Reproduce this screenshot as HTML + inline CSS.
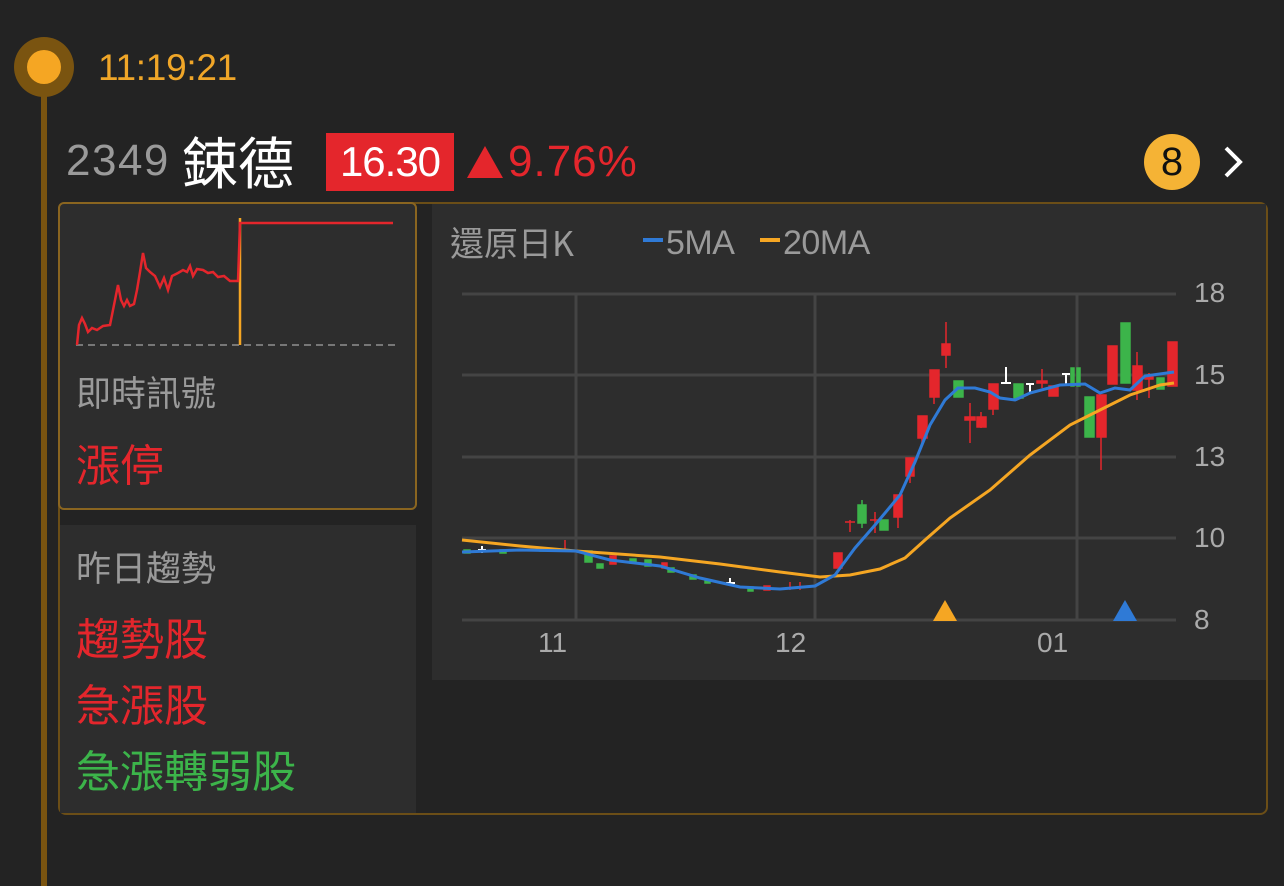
<!DOCTYPE html>
<html><head><meta charset="utf-8"><style>
*{margin:0;padding:0;box-sizing:border-box}
body{width:1284px;height:876px;background:#232323;position:relative;overflow:hidden;font-family:"Liberation Sans","Noto Sans CJK TC",sans-serif}
.abs{position:absolute;white-space:nowrap}
.cjk{font-family:"Noto Sans CJK TC",sans-serif}
</style></head><body>
<div class="abs" style="left:41px;top:66px;width:6px;height:820px;background:#7a5410"></div>
<div class="abs" style="left:14px;top:37px;width:60px;height:60px;border-radius:50%;background:#7a5410"></div>
<div class="abs" style="left:27px;top:50px;width:34px;height:34px;border-radius:50%;background:#f5a623"></div>
<div class="abs" style="left:98px;top:46px;font-size:37px;color:#f0a628;line-height:44px;letter-spacing:-0.3px">11:19:21</div>

<div class="abs" style="left:66px;top:135px;font-size:44px;color:#9a9a9a;line-height:52px;letter-spacing:1.5px">2349</div>
<div class="abs cjk" style="left:182px;top:128px;font-size:56px;color:#fff;line-height:66px">鋉德</div>
<div class="abs" style="left:326px;top:133px;width:128px;height:58px;background:#e4262c;color:#fff;font-size:42px;line-height:58px;text-align:center;letter-spacing:-1px">16.30</div>
<svg class="abs" style="left:466px;top:145px" width="40" height="34"><polygon points="19,1 37,33 1,33" fill="#e4262c"/></svg>
<div class="abs" style="left:508px;top:137px;font-size:44px;color:#e4262c;line-height:50px;letter-spacing:1px">9.76%</div>
<div class="abs" style="left:1144px;top:134px;width:56px;height:56px;border-radius:50%;background:#f5b335;color:#111;font-size:40px;line-height:56px;text-align:center">8</div>
<svg class="abs" style="left:1220px;top:145px" width="30" height="34"><path d="M6 3 L20 17 L6 31" stroke="#fff" stroke-width="4" fill="none"/></svg>

<div class="abs" style="left:58px;top:202px;width:1210px;height:613px;border:2px solid #6b4e17;border-radius:8px"></div>
<div class="abs" style="left:60px;top:525px;width:356px;height:288px;background:#2d2d2d"></div>
<div class="abs" style="left:432px;top:204px;width:834px;height:476px;background:#2d2d2d"></div>
<div class="abs" style="left:58px;top:202px;width:359px;height:308px;border:2px solid #8a6520;border-radius:6px;background:#2d2d2d"></div>

<svg class="abs" style="left:0;top:0" width="420" height="360">
<line x1="76" y1="345" x2="398" y2="345" stroke="#777" stroke-width="2" stroke-dasharray="7,5"/>
<line x1="240" y1="218" x2="240" y2="345" stroke="#f5a623" stroke-width="2.5"/>
<polyline fill="none" stroke="#e4262c" stroke-width="2.5" points="77,345 79,325 82,318 85,324 88,332 92,328 97,330 103,326 110,325 114,305 118,285 121,300 124,306 127,300 130,306 134,304 137,290 140,272 143,253 146,268 150,272 155,276 160,287 164,278 168,290 172,276 178,273 183,270 187,272 190,266 193,276 197,269 203,270 208,273 213,272 218,277 224,276 230,281 238,281 240,223 393,223"/>
</svg>
<div class="abs cjk" style="left:76px;top:370px;font-size:35px;color:#9a9a9a;line-height:44px">即時訊號</div>
<div class="abs cjk" style="left:76px;top:436px;font-size:44px;color:#e4262c;line-height:52px">漲停</div>
<div class="abs cjk" style="left:76px;top:545px;font-size:35px;color:#9a9a9a;line-height:44px">昨日趨勢</div>
<div class="abs cjk" style="left:76px;top:610px;font-size:44px;color:#e4262c;line-height:52px">趨勢股</div>
<div class="abs cjk" style="left:76px;top:676px;font-size:44px;color:#e4262c;line-height:52px">急漲股</div>
<div class="abs cjk" style="left:76px;top:742px;font-size:44px;color:#3cb44a;line-height:52px">急漲轉弱股</div>

<div class="abs cjk" style="left:450px;top:220px;font-size:34px;color:#9a9a9a;line-height:44px">還原日K</div>
<div class="abs" style="left:643px;top:238px;width:20px;height:4px;background:#2f7ad6"></div>
<div class="abs" style="left:666px;top:223px;font-size:34px;color:#9a9a9a;line-height:40px;letter-spacing:-0.5px">5MA</div>
<div class="abs" style="left:760px;top:238px;width:20px;height:4px;background:#f5a623"></div>
<div class="abs" style="left:783px;top:223px;font-size:34px;color:#9a9a9a;line-height:40px;letter-spacing:-0.5px">20MA</div>

<svg class="abs" style="left:0;top:0" width="1284" height="876" font-family="Liberation Sans" font-size="28" fill="#aaa">
<g stroke="#444" stroke-width="3">
<line x1="462" y1="294" x2="1176" y2="294"/><line x1="462" y1="375" x2="1176" y2="375"/><line x1="462" y1="457" x2="1176" y2="457"/><line x1="462" y1="538" x2="1176" y2="538"/><line x1="462" y1="620" x2="1176" y2="620"/>
<line x1="576" y1="294" x2="576" y2="620"/><line x1="815" y1="294" x2="815" y2="620"/><line x1="1077" y1="294" x2="1077" y2="620"/>
</g>
<text x="1194" y="302">18</text><text x="1194" y="384">15</text><text x="1194" y="466">13</text><text x="1194" y="547">10</text><text x="1194" y="629">8</text>
<text x="538" y="652">11</text><text x="775" y="652">12</text><text x="1037" y="652">01</text>
<g stroke-width="1.5">
<g fill="#e4262c" stroke="#e4262c">
<line x1="565" y1="540" x2="565" y2="552"/><rect x="610" y="556" width="6" height="8"/><rect x="662" y="563" width="5" height="5"/>
<rect x="764" y="586" width="6" height="4"/><line x1="790" y1="582" x2="790" y2="590"/><line x1="800" y1="582" x2="800" y2="590"/>
<rect x="834" y="553" width="8" height="15"/>
<line x1="850" y1="520" x2="850" y2="532"/><line x1="845" y1="522" x2="855" y2="522"/>
<line x1="875" y1="512" x2="875" y2="533"/><line x1="870" y1="520" x2="880" y2="520"/>
<rect x="894" y="495" width="8" height="22"/><line x1="898" y1="517" x2="898" y2="528"/>
<rect x="906" y="458" width="8" height="18"/><line x1="910" y1="476" x2="910" y2="483"/>
<rect x="918" y="416" width="9" height="22"/><line x1="922" y1="438" x2="922" y2="445"/>
<rect x="930" y="370" width="9" height="27"/><line x1="934" y1="397" x2="934" y2="404"/>
<rect x="942" y="344" width="8" height="11"/><line x1="946" y1="322" x2="946" y2="368"/>
<line x1="970" y1="403" x2="970" y2="443"/><rect x="965" y="417" width="10" height="3"/>
<rect x="977" y="417" width="9" height="10"/><line x1="981" y1="412" x2="981" y2="428"/>
<rect x="989" y="384" width="9" height="25"/><line x1="993" y1="409" x2="993" y2="415"/>
<line x1="1042" y1="369" x2="1042" y2="388"/><rect x="1037" y="381" width="10" height="2"/>
<rect x="1049" y="386" width="9" height="10"/>
<rect x="1097" y="395" width="9" height="42"/><line x1="1101" y1="437" x2="1101" y2="470"/>
<rect x="1108" y="346" width="9" height="38"/>
<rect x="1133" y="366" width="9" height="24"/><line x1="1137" y1="352" x2="1137" y2="400"/>
<line x1="1149" y1="373" x2="1149" y2="398"/><rect x="1145" y="377" width="8" height="2"/>
<rect x="1168" y="342" width="9" height="44"/>
</g>
<g fill="#3cb44a" stroke="#3cb44a">
<rect x="464" y="550" width="6" height="3"/><rect x="500" y="550" width="6" height="3"/><rect x="540" y="548" width="6" height="3"/>
<rect x="585" y="551" width="7" height="11"/><rect x="597" y="564" width="6" height="4"/><rect x="630" y="559" width="6" height="4"/><rect x="645" y="560" width="6" height="6"/>
<rect x="668" y="568" width="6" height="4"/><rect x="690" y="575" width="6" height="4"/><rect x="705" y="580" width="5" height="3"/><rect x="748" y="587" width="5" height="4"/>
<rect x="858" y="505" width="8" height="18"/><line x1="862" y1="500" x2="862" y2="528"/>
<rect x="880" y="520" width="8" height="10"/>
<rect x="954" y="381" width="9" height="16"/>
<rect x="1014" y="384" width="9" height="14"/>
<rect x="1071" y="368" width="3" height="18"/><rect x="1077" y="368" width="3" height="18"/>
<rect x="1085" y="397" width="9" height="40"/>
<rect x="1121" y="323" width="9" height="60"/>
<rect x="1157" y="378" width="7" height="11"/>
</g>
<g stroke="#fff" fill="none" stroke-width="2">
<line x1="478" y1="550" x2="486" y2="550"/><line x1="482" y1="546" x2="482" y2="553"/>
<line x1="726" y1="583" x2="735" y2="583"/><line x1="730" y1="578" x2="730" y2="586"/>
<line x1="1006" y1="367" x2="1006" y2="383"/><line x1="1001" y1="383" x2="1011" y2="383"/>
<line x1="1026" y1="384" x2="1034" y2="384"/><line x1="1030" y1="384" x2="1030" y2="394"/>
<line x1="1062" y1="374" x2="1070" y2="374"/><line x1="1066" y1="374" x2="1066" y2="384"/>
</g>
</g>
<polyline fill="none" stroke="#f5a623" stroke-width="3" points="462,540 520,546 576,551 660,557 720,564 780,572 820,577 850,575 880,569 905,558 925,540 950,518 990,490 1030,455 1070,425 1100,410 1130,395 1160,385 1174,383"/>
<polyline fill="none" stroke="#2f7ad6" stroke-width="3" points="462,552 520,550 576,551 610,560 660,566 700,578 740,587 780,589 815,586 835,575 855,548 875,525 900,495 915,462 930,425 945,400 958,388 975,388 990,392 1000,398 1015,400 1030,393 1060,385 1085,384 1100,393 1115,388 1130,390 1145,376 1174,372"/>
<polygon points="945,600 957,621 933,621" fill="#f5a623"/>
<polygon points="1125,600 1137,621 1113,621" fill="#2f7ad6"/>
</svg>
</body></html>
